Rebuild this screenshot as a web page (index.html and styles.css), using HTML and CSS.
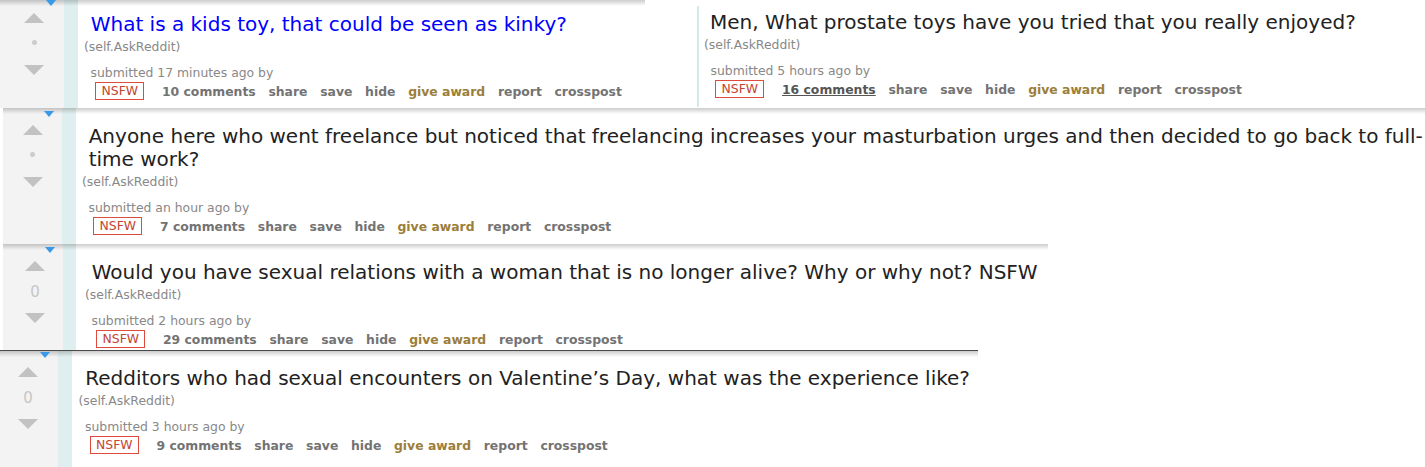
FILE: index.html
```html
<!DOCTYPE html>
<html lang="en">
<head>
<meta charset="utf-8">
<title>AskReddit posts</title>
<link rel="stylesheet" href="styles.css">
</head>
<body>
<div class="collage">

  <div class="band band-1">
    <article class="post post-a">
      <div class="vote">
        <span class="marker"></span>
        <svg class="arrow" width="20" height="10" viewBox="0 0 20 10"><polygon points="10,0 20,10 0,10"/></svg>
        <div class="score"><span class="dot"></span></div>
        <svg class="arrow" width="20" height="10" viewBox="0 0 20 10"><polygon points="0,0 20,0 10,10"/></svg>
      </div>
      <div class="stripe"></div>
      <div class="entry">
        <p class="title title-link">What is a kids toy, that could be seen as kinky?</p>
        <p class="domain">(self.AskReddit)</p>
        <p class="tagline">submitted 17 minutes ago by</p>
        <ul class="buttons">
          <li class="nsfw">NSFW</li>
          <li>10 comments</li>
          <li>share</li>
          <li>save</li>
          <li>hide</li>
          <li class="gold">give award</li>
          <li>report</li>
          <li>crosspost</li>
        </ul>
      </div>
    </article>
    <article class="post post-b">
      <div class="entry">
        <p class="title">Men, What prostate toys have you tried that you really enjoyed?</p>
        <p class="domain">(self.AskReddit)</p>
        <p class="tagline">submitted 5 hours ago by</p>
        <ul class="buttons">
          <li class="nsfw">NSFW</li>
          <li class="hovered">16 comments</li>
          <li>share</li>
          <li>save</li>
          <li>hide</li>
          <li class="gold">give award</li>
          <li>report</li>
          <li>crosspost</li>
        </ul>
      </div>
    </article>
  </div>

  <div class="band band-2">
    <article class="post">
      <div class="vote">
        <span class="marker"></span>
        <svg class="arrow" width="20" height="10" viewBox="0 0 20 10"><polygon points="10,0 20,10 0,10"/></svg>
        <div class="score"><span class="dot"></span></div>
        <svg class="arrow" width="20" height="10" viewBox="0 0 20 10"><polygon points="0,0 20,0 10,10"/></svg>
      </div>
      <div class="stripe"></div>
      <div class="entry">
        <p class="title">Anyone here who went freelance but noticed that freelancing increases your masturbation urges and then decided to go back to full-<br>time work?</p>
        <p class="domain">(self.AskReddit)</p>
        <p class="tagline">submitted an hour ago by</p>
        <ul class="buttons">
          <li class="nsfw">NSFW</li>
          <li>7 comments</li>
          <li>share</li>
          <li>save</li>
          <li>hide</li>
          <li class="gold">give award</li>
          <li>report</li>
          <li>crosspost</li>
        </ul>
      </div>
    </article>
  </div>

  <div class="band band-3">
    <article class="post">
      <div class="vote">
        <span class="marker"></span>
        <svg class="arrow" width="20" height="10" viewBox="0 0 20 10"><polygon points="10,0 20,10 0,10"/></svg>
        <div class="score">0</div>
        <svg class="arrow" width="20" height="10" viewBox="0 0 20 10"><polygon points="0,0 20,0 10,10"/></svg>
      </div>
      <div class="stripe"></div>
      <div class="entry">
        <p class="title">Would you have sexual relations with a woman that is no longer alive? Why or why not? NSFW</p>
        <p class="domain">(self.AskReddit)</p>
        <p class="tagline">submitted 2 hours ago by</p>
        <ul class="buttons">
          <li class="nsfw">NSFW</li>
          <li>29 comments</li>
          <li>share</li>
          <li>save</li>
          <li>hide</li>
          <li class="gold">give award</li>
          <li>report</li>
          <li>crosspost</li>
        </ul>
      </div>
    </article>
  </div>

  <div class="band band-4">
    <article class="post">
      <div class="vote">
        <span class="marker"></span>
        <svg class="arrow" width="20" height="10" viewBox="0 0 20 10"><polygon points="10,0 20,10 0,10"/></svg>
        <div class="score">0</div>
        <svg class="arrow" width="20" height="10" viewBox="0 0 20 10"><polygon points="0,0 20,0 10,10"/></svg>
      </div>
      <div class="stripe"></div>
      <div class="entry">
        <p class="title">Redditors who had sexual encounters on Valentine’s Day, what was the experience like?</p>
        <p class="domain">(self.AskReddit)</p>
        <p class="tagline">submitted 3 hours ago by</p>
        <ul class="buttons">
          <li class="nsfw">NSFW</li>
          <li>9 comments</li>
          <li>share</li>
          <li>save</li>
          <li>hide</li>
          <li class="gold">give award</li>
          <li>report</li>
          <li>crosspost</li>
        </ul>
      </div>
    </article>
  </div>

</div>
</body>
</html>
```

FILE: styles.css
```css
* {
  box-sizing: border-box;
  margin: 0;
  padding: 0;
}

html, body {
  background: #ffffff;
}

body {
  margin: 0;
  width: 1425px;
  height: 467px;
  overflow: hidden;
  font-family: "DejaVu Sans", Verdana, sans-serif;
  color: #222222;
}

.collage {
  display: flex;
  flex-direction: column;
}

.band {
  display: flex;
  overflow: hidden;
  flex: none;
}

.post {
  position: relative;
  display: flex;
  flex: 1;
  background: #ffffff;
}

/* drop shadow along the top edge of each cut-out strip */
.post::before {
  content: "";
  position: absolute;
  left: 0;
  right: 0;
  top: 0;
  height: 6px;
  background: linear-gradient(rgba(0, 0, 0, 0.2), rgba(0, 0, 0, 0));
  z-index: 2;
  pointer-events: none;
}

/* ---------- vote column ---------- */
.vote {
  position: relative;
  flex: none;
  display: flex;
  flex-direction: column;
  align-items: center;
  padding-top: 17px;
  background: #f3f3f3;
}

.marker {
  position: absolute;
  top: 3px;
  right: 8px;
  width: 0;
  height: 0;
  border-left: 5.5px solid transparent;
  border-right: 5.5px solid transparent;
  border-top: 6px solid #3a98e8;
  z-index: 3;
}

.arrow {
  display: block;
  fill: #c2c2c2;
}

.score {
  height: 42px;
  display: flex;
  align-items: center;
  justify-content: center;
  font-size: 15px;
  color: #c6c6c6;
}

.dot {
  width: 5px;
  height: 5px;
  border-radius: 50%;
  background: #cccccc;
  margin-bottom: 3px;
}

.stripe {
  flex: none;
  width: 14px;
  background: #dfefef;
}

/* ---------- entry ---------- */
.entry {
  flex: 1;
  min-width: 0;
  padding-top: 17px;
  padding-left: 6px;
}

.title {
  margin-left: 6.7px;
  font-size: 20px;
  line-height: 23.3px;
  white-space: nowrap;
  color: #222222;
}

.title-link {
  color: #0000ff;
}

.domain {
  margin-top: 2.5px;
  font-size: 12.4px;
  line-height: 15px;
  color: #888888;
}

.tagline {
  margin-top: 11px;
  margin-left: 6.5px;
  font-size: 12.4px;
  line-height: 15px;
  color: #888888;
}

.buttons {
  list-style: none;
  display: flex;
  align-items: flex-start;
  gap: 12.7px;
  margin-top: 2.3px;
  margin-left: 6.5px;
  font-size: 12.4px;
  font-weight: bold;
  line-height: 20px;
  color: #737373;
  white-space: nowrap;
}

.buttons .gold {
  color: #9b7e3a;
}

.buttons .hovered {
  color: #555555;
  text-decoration: underline;
}

.buttons .nsfw {
  margin-left: 4.7px;
  margin-right: 4.8px;
  height: 18px;
  padding: 0 5.4px;
  border: 1px solid #de4a3c;
  font-weight: normal;
  line-height: 16px;
  color: #c4452f;
}

/* ---------- band 1 : two posts side by side ---------- */
.band-1 {
  height: 108px;
}

.post-a {
  flex: none;
  width: 645px;
}

.post-a .vote {
  width: 64px;
  padding-top: 13px;
  padding-left: 4px;
}

.post-a .marker {
  top: 0;
}

.post-a .entry {
  padding-top: 13.3px;
}

.post-b {
  flex: 1;
  margin-left: 52px;
  margin-top: 6px;
  height: 101px;
  border-left: 2px solid #d4e9e9;
}

.post-b::before {
  display: none;
}

.post-b .entry {
  padding-top: 4.9px;
  padding-left: 5px;
}

.post-b .title {
  margin-left: 6px;
}

/* ---------- band 2 ---------- */
.band-2 {
  height: 136px;
  margin-left: 3px;
}

.band-2 .vote {
  width: 59px;
}

/* ---------- band 3 ---------- */
.band-3 {
  height: 106px;
  width: 1048px;
  padding-left: 3px;
}

.band-3 .vote {
  width: 60px;
  padding-left: 4px;
}

.band-3 .stripe {
  width: 13px;
}

.band-3 .entry {
  padding-left: 9px;
}

/* ---------- band 4 ---------- */
.band-4 {
  width: 978px;
  height: 117px;
  border-top: 1px solid #4a4a4a;
}

.band-4 .vote {
  width: 58px;
  padding-top: 16px;
  padding-right: 2px;
}

.band-4 .marker {
  top: 1px;
}

.band-4 .entry {
  padding-top: 16px;
  padding-left: 6.5px;
}
```
